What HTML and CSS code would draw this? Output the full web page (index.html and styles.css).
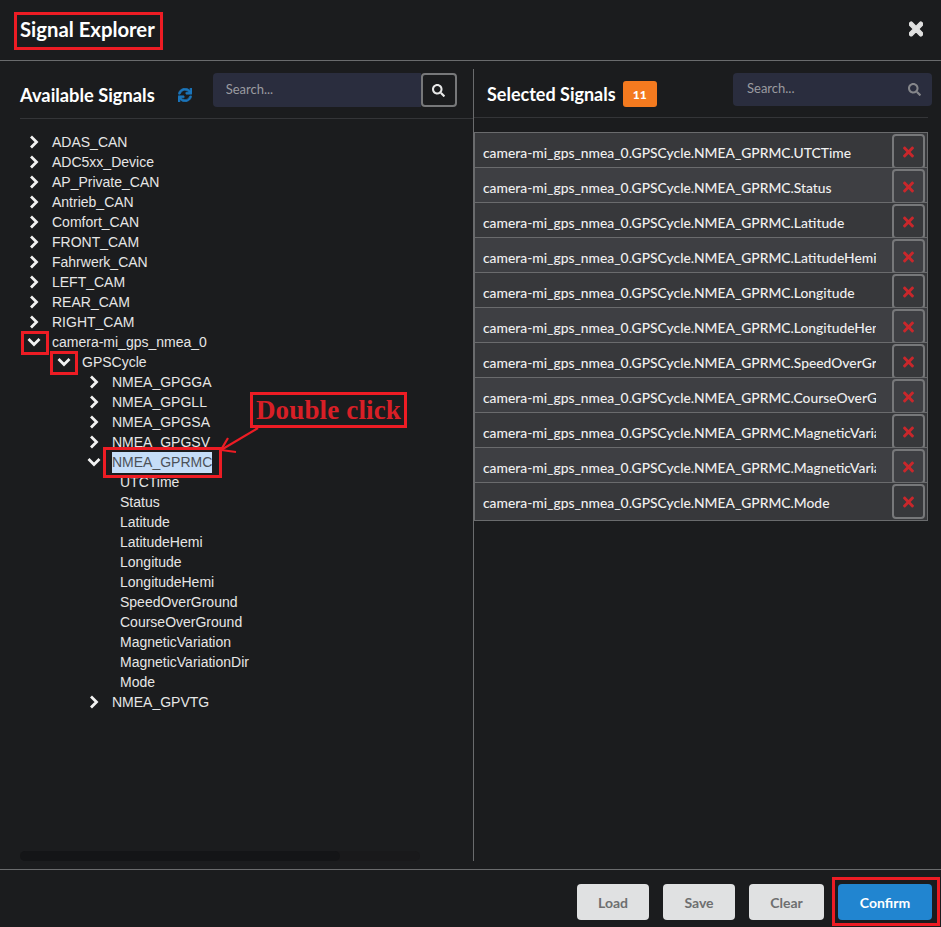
FILE: index.html
```html
<!DOCTYPE html>
<html>

<head>
  <meta charset="UTF-8">
  <title>Signal Explorer</title>
  <link rel="stylesheet" href="styles.css">
</head>

<body>
  <svg class="defs" width="0" height="0">
    <symbol id="i-right" viewBox="0 0 14 14"><polyline points="4,1.5 9.5,7 4,12.5" fill="none" stroke="currentColor" stroke-width="2.8"/></symbol>
    <symbol id="i-down" viewBox="0 0 14 14"><polyline points="1.5,4 7,9.5 12.5,4" fill="none" stroke="currentColor" stroke-width="2.8"/></symbol>
    <symbol id="i-search" viewBox="0 0 512 512"><path fill="currentColor" d="M505 442.7L405.3 343c-4.5-4.5-10.6-7-17-7H372c27.6-35.3 44-79.7 44-128C416 93.1 322.9 0 208 0S0 93.1 0 208s93.1 208 208 208c48.3 0 92.7-16.4 128-44v16.3c0 6.4 2.5 12.5 7 17l99.7 99.7c9.4 9.4 24.6 9.4 33.9 0l28.3-28.3c9.4-9.4 9.4-24.6.1-34zM208 336c-70.7 0-128-57.2-128-128 0-70.7 57.2-128 128-128 70.7 0 128 57.2 128 128 0 70.7-57.2 128-128 128z"/></symbol>
    <symbol id="i-times" viewBox="0 0 352 512"><path fill="currentColor" d="M242.72 256l100.07-100.07c12.28-12.28 12.28-32.19 0-44.48l-22.24-22.24c-12.28-12.28-32.19-12.28-44.48 0L176 189.28 75.93 89.21c-12.28-12.28-32.19-12.28-44.48 0L9.21 111.45c-12.28 12.28-12.28 32.19 0 44.48L109.28 256 9.21 356.07c-12.28 12.28-12.28 32.19 0 44.48l22.24 22.24c12.28 12.28 32.2 12.28 44.48 0L176 322.72l100.07 100.07c12.28 12.28 32.2 12.28 44.48 0l22.24-22.24c12.28-12.28 12.28-32.19 0-44.48L242.72 256z"/></symbol>
    <symbol id="i-sync" viewBox="0 0 512 512"><path fill="currentColor" d="M440.65 12.57l4 82.77A247.16 247.16 0 0 0 255.83 8C134.73 8 33.91 94.92 12.29 209.82A12 12 0 0 0 24.09 224h49.05a12 12 0 0 0 11.67-9.26 175.91 175.91 0 0 1 317-56.94l-101.46-4.86a12 12 0 0 0-12.57 12v47.41a12 12 0 0 0 12 12H500a12 12 0 0 0 12-12V12a12 12 0 0 0-12-12h-47.37a12 12 0 0 0-11.98 12.57zM255.83 432a175.61 175.61 0 0 1-146-77.8l101.8 4.87a12 12 0 0 0 12.57-12v-47.4a12 12 0 0 0-12-12H12a12 12 0 0 0-12 12V500a12 12 0 0 0 12 12h47.35a12 12 0 0 0 12-12.6l-4.15-82.57A247.17 247.17 0 0 0 255.83 504c121.11 0 221.93-86.92 243.55-201.82a12 12 0 0 0-11.8-14.18h-49.05a12 12 0 0 0-11.67 9.26A175.86 175.86 0 0 1 255.83 432z"/></symbol>
  </svg>

  <div class="modal">
    <header class="modal-header">
      <h1>Signal Explorer</h1>
      <button class="close-btn"><svg width="14" height="20"><use href="#i-times"/></svg></button>
    </header>

    <main class="modal-body">
      <section class="panel-left">
        <div class="panel-head head-left">
          <h2 class="title-available">Available Signals</h2>
          <svg class="refresh" width="14" height="14"><use href="#i-sync"/></svg>
          <div class="search-group">
            <input class="search-input" placeholder="Search...">
            <button class="search-btn"><svg width="13" height="13"><use href="#i-search"/></svg></button>
          </div>
        </div>

        <ul class="tree">
          <li><div class="tree-row"><span class="toggle"><svg width="14" height="14"><use href="#i-right"/></svg></span>ADAS_CAN</div></li>
          <li><div class="tree-row"><span class="toggle"><svg width="14" height="14"><use href="#i-right"/></svg></span>ADC5xx_Device</div></li>
          <li><div class="tree-row"><span class="toggle"><svg width="14" height="14"><use href="#i-right"/></svg></span>AP_Private_CAN</div></li>
          <li><div class="tree-row"><span class="toggle"><svg width="14" height="14"><use href="#i-right"/></svg></span>Antrieb_CAN</div></li>
          <li><div class="tree-row"><span class="toggle"><svg width="14" height="14"><use href="#i-right"/></svg></span>Comfort_CAN</div></li>
          <li><div class="tree-row"><span class="toggle"><svg width="14" height="14"><use href="#i-right"/></svg></span>FRONT_CAM</div></li>
          <li><div class="tree-row"><span class="toggle"><svg width="14" height="14"><use href="#i-right"/></svg></span>Fahrwerk_CAN</div></li>
          <li><div class="tree-row"><span class="toggle"><svg width="14" height="14"><use href="#i-right"/></svg></span>LEFT_CAM</div></li>
          <li><div class="tree-row"><span class="toggle"><svg width="14" height="14"><use href="#i-right"/></svg></span>REAR_CAM</div></li>
          <li><div class="tree-row"><span class="toggle"><svg width="14" height="14"><use href="#i-right"/></svg></span>RIGHT_CAM</div></li>
          <li>
            <div class="tree-row"><span class="toggle"><svg width="14" height="14"><use href="#i-down"/></svg></span>camera-mi_gps_nmea_0</div>
            <ul class="tree-sub">
              <li>
                <div class="tree-row"><span class="toggle"><svg width="14" height="14"><use href="#i-down"/></svg></span>GPSCycle</div>
                <ul class="tree-sub">
                  <li><div class="tree-row"><span class="toggle"><svg width="14" height="14"><use href="#i-right"/></svg></span>NMEA_GPGGA</div></li>
                  <li><div class="tree-row"><span class="toggle"><svg width="14" height="14"><use href="#i-right"/></svg></span>NMEA_GPGLL</div></li>
                  <li><div class="tree-row"><span class="toggle"><svg width="14" height="14"><use href="#i-right"/></svg></span>NMEA_GPGSA</div></li>
                  <li><div class="tree-row"><span class="toggle"><svg width="14" height="14"><use href="#i-right"/></svg></span>NMEA_GPGSV</div></li>
                  <li>
                    <div class="tree-row"><span class="toggle"><svg width="14" height="14"><use href="#i-down"/></svg></span><span class="selected-text">NMEA_GPRMC</span></div>
                    <ul class="tree-leaves">
                      <li class="tree-row">UTCTime</li>
                      <li class="tree-row">Status</li>
                      <li class="tree-row">Latitude</li>
                      <li class="tree-row">LatitudeHemi</li>
                      <li class="tree-row">Longitude</li>
                      <li class="tree-row">LongitudeHemi</li>
                      <li class="tree-row">SpeedOverGround</li>
                      <li class="tree-row">CourseOverGround</li>
                      <li class="tree-row">MagneticVariation</li>
                      <li class="tree-row">MagneticVariationDir</li>
                      <li class="tree-row">Mode</li>
                    </ul>
                  </li>
                  <li><div class="tree-row"><span class="toggle"><svg width="14" height="14"><use href="#i-right"/></svg></span>NMEA_GPVTG</div></li>
                </ul>
              </li>
            </ul>
          </li>
        </ul>

        <div class="scrollbar"><div class="scrollbar-thumb"></div></div>
      </section>

      <section class="panel-right">
        <div class="panel-head head-right">
          <h2 class="title-selected">Selected Signals</h2>
          <span class="badge">11</span>
          <div class="search-plain">
            <input class="search-input" placeholder="Search...">
            <svg width="13" height="13"><use href="#i-search"/></svg>
          </div>
        </div>

        <div class="signal-list">
          <div class="signal-row"><span class="signal-name">camera-mi_gps_nmea_0.GPSCycle.NMEA_GPRMC.UTCTime</span><button class="remove-btn"><svg width="11" height="16"><use href="#i-times"/></svg></button></div>
          <div class="signal-row"><span class="signal-name">camera-mi_gps_nmea_0.GPSCycle.NMEA_GPRMC.Status</span><button class="remove-btn"><svg width="11" height="16"><use href="#i-times"/></svg></button></div>
          <div class="signal-row"><span class="signal-name">camera-mi_gps_nmea_0.GPSCycle.NMEA_GPRMC.Latitude</span><button class="remove-btn"><svg width="11" height="16"><use href="#i-times"/></svg></button></div>
          <div class="signal-row"><span class="signal-name">camera-mi_gps_nmea_0.GPSCycle.NMEA_GPRMC.LatitudeHemi</span><button class="remove-btn"><svg width="11" height="16"><use href="#i-times"/></svg></button></div>
          <div class="signal-row"><span class="signal-name">camera-mi_gps_nmea_0.GPSCycle.NMEA_GPRMC.Longitude</span><button class="remove-btn"><svg width="11" height="16"><use href="#i-times"/></svg></button></div>
          <div class="signal-row"><span class="signal-name">camera-mi_gps_nmea_0.GPSCycle.NMEA_GPRMC.LongitudeHemi</span><button class="remove-btn"><svg width="11" height="16"><use href="#i-times"/></svg></button></div>
          <div class="signal-row"><span class="signal-name">camera-mi_gps_nmea_0.GPSCycle.NMEA_GPRMC.SpeedOverGround</span><button class="remove-btn"><svg width="11" height="16"><use href="#i-times"/></svg></button></div>
          <div class="signal-row"><span class="signal-name">camera-mi_gps_nmea_0.GPSCycle.NMEA_GPRMC.CourseOverGround</span><button class="remove-btn"><svg width="11" height="16"><use href="#i-times"/></svg></button></div>
          <div class="signal-row"><span class="signal-name">camera-mi_gps_nmea_0.GPSCycle.NMEA_GPRMC.MagneticVariation</span><button class="remove-btn"><svg width="11" height="16"><use href="#i-times"/></svg></button></div>
          <div class="signal-row"><span class="signal-name">camera-mi_gps_nmea_0.GPSCycle.NMEA_GPRMC.MagneticVariationDir</span><button class="remove-btn"><svg width="11" height="16"><use href="#i-times"/></svg></button></div>
          <div class="signal-row"><span class="signal-name">camera-mi_gps_nmea_0.GPSCycle.NMEA_GPRMC.Mode</span><button class="remove-btn"><svg width="11" height="16"><use href="#i-times"/></svg></button></div>
        </div>
      </section>
    </main>

    <footer class="modal-footer">
      <button class="btn btn-load">Load</button>
      <button class="btn btn-save">Save</button>
      <button class="btn btn-clear">Clear</button>
      <button class="btn btn-confirm">Confirm</button>
    </footer>
  </div>

  <!-- red annotations on top of the screenshot -->
  <div class="mark mark-title"></div>
  <div class="mark mark-toggle-a"></div>
  <div class="mark mark-toggle-b"></div>
  <div class="mark mark-node"></div>
  <div class="mark mark-confirm"></div>
  <div class="mark mark-note">Double click</div>
  <svg class="mark-arrow" width="60" height="40" viewBox="0 0 60 40">
    <polyline points="40,1 3,23" fill="none" stroke="#ed1c24" stroke-width="2.2"/>
    <polyline points="10,11 3,23 18,25" fill="none" stroke="#ed1c24" stroke-width="2.2"/>
  </svg>
</body>

</html>
```

FILE: styles.css
```css
* {
  box-sizing: border-box;
}

html,
body {
  margin: 0;
  height: 927px;
  overflow: hidden;
  background-color: #1b1c1e;
}

body {
  position: relative;
  font-family: "Lato", sans-serif;
  color: #ffffff;
}

.defs {
  position: absolute;
}

.modal {
  display: flex;
  flex-direction: column;
  height: 927px;
}

.modal-header {
  display: flex;
  justify-content: space-between;
  align-items: center;
  height: 61px;
  padding: 0 18px 2px 20px;
  border-bottom: 1px solid #6a6b6d;
}

h1 {
  margin: 0;
  font-size: 20.3px;
  font-weight: 700;
}

h2 {
  margin: 0;
  font-weight: 700;
}

.title-available {
  font-size: 18.3px;
}

.title-selected {
  font-size: 18px;
}

.close-btn {
  padding: 0;
  background: none;
  border: none;
  color: #e0e0e0;
  stroke: #e0e0e0;
  stroke-width: 36px;
  display: flex;
}

.modal-body {
  display: flex;
  height: 808px;
  padding: 8px 0;
}

.panel-left {
  position: relative;
  width: 474px;
  padding-left: 20px;
  border-right: 1px solid #6a6b6d;
}

.panel-right {
  flex: 1;
}

.panel-head {
  display: flex;
}

.head-left {
  height: 50px;
  padding-top: 4px;
  border-bottom: 1px solid #343538;
  align-items: flex-start;
}

.head-left h2 {
  margin-top: 11px;
}

.refresh {
  margin: 15px 21px 0 23px;
  color: #1b75bb;
  stroke: #1b75bb;
  stroke-width: 24px;
}

.search-group {
  display: flex;
}

.search-input {
  height: 34px;
  padding: 0 13px 3px;
  border: none;
  border-radius: 4px 0 0 4px;
  background-color: #2a2d3e;
  font-family: "Lato", sans-serif;
  font-size: 13px;
  color: #ffffff;
  outline: none;
}

.search-input::placeholder {
  color: #9a9ba0;
}

.search-group .search-input {
  width: 208px;
}

.search-btn {
  display: flex;
  align-items: center;
  justify-content: center;
  width: 36px;
  height: 34px;
  padding: 0;
  background: none;
  border: 2px solid #77787a;
  border-radius: 4px;
  color: #e8e8e8;
}

.head-right {
  position: relative;
  width: 454px;
  height: 49px;
  padding: 12px 0 0 13px;
  border-bottom: 1px solid #343538;
  align-items: flex-start;
}

.head-right h2 {
  margin-top: 2px;
}

.badge {
  display: flex;
  align-items: center;
  justify-content: center;
  width: 34px;
  height: 26px;
  margin-left: 7px;
  background-color: #f47a1f;
  border-radius: 3px;
  font-size: 12px;
  font-weight: 900;
}

.search-plain {
  position: absolute;
  top: 4px;
  left: 259px;
  width: 199px;
  display: flex;
  align-items: center;
  color: #85868a;
}

.search-plain .search-input {
  width: 100%;
  height: 33px;
  padding-left: 14px;
  border-radius: 4px;
}

.search-plain svg {
  position: absolute;
  right: 11px;
}

.tree,
.tree-sub,
.tree-leaves {
  margin: 0;
  padding: 0;
  list-style: none;
}

.tree {
  margin-top: 13px;
  font-family: "Liberation Sans", sans-serif;
  font-size: 14px;
  color: #e6e6e6;
}

.tree-sub {
  padding-left: 30px;
}

.tree-leaves {
  padding-left: 40px;
}

.tree-row {
  display: flex;
  align-items: center;
  height: 20px;
  white-space: nowrap;
}

.toggle {
  display: flex;
  width: 32px;
  padding-left: 7px;
  color: #f2f2f2;
}

.selected-text {
  background-color: #c5ddf8;
  color: #4c5158;
  line-height: 21px;
}

.scrollbar {
  position: absolute;
  left: 20px;
  bottom: 0;
  width: 400px;
  height: 10px;
  background-color: #19191b;
  border-radius: 5px;
}

.scrollbar-thumb {
  width: 320px;
  height: 10px;
  background-color: #141517;
  border-radius: 5px;
}

.signal-list {
  width: 454px;
  margin-top: 14px;
  border-right: 1px solid #6a6b6d;
  border-bottom: 1px solid #6a6b6d;
  border-left: 1px solid #6a6b6d;
}

.signal-row {
  display: flex;
  align-items: flex-start;
  height: 35px;
  padding: 1px 0 0 8px;
  overflow: hidden;
  border-top: 1px solid #6a6b6d;
  background-color: #37383b;
}

.signal-row:nth-child(even) {
  background-color: #3e3f43;
}

.signal-row:last-child {
  height: 38px;
}

.signal-name {
  width: 393px;
  line-height: 38px;
  overflow: hidden;
  white-space: nowrap;
  font-size: 13.84px;
  font-weight: 500;
  color: #f0f0f0;
}

.remove-btn {
  display: flex;
  flex: none;
  align-items: center;
  justify-content: center;
  width: 33px;
  height: 35px;
  margin-left: 16px;
  padding: 0;
  background: none;
  border: 2px solid #77787a;
  border-radius: 4px;
  color: #c9272b;
}

.modal-footer {
  display: flex;
  justify-content: flex-end;
  gap: 14px;
  height: 58px;
  padding: 14px 9px 0 0;
  border-top: 1px solid #6a6b6d;
}

.btn {
  height: 36px;
  padding: 0;
  border: none;
  border-radius: 4px;
  background-color: #e0e1e2;
  font-family: "Lato", sans-serif;
  font-size: 14px;
  font-weight: 700;
  color: #6e6f70;
}

.btn-load,
.btn-save {
  width: 72px;
}

.btn-clear {
  width: 75px;
}

.btn-confirm {
  width: 94px;
  background-color: #2185d0;
  color: #ffffff;
}

.mark {
  position: absolute;
  border: 3px solid #ed1c24;
}

.mark-title {
  left: 14px;
  top: 12px;
  width: 149px;
  height: 38px;
}

.mark-toggle-a {
  left: 21px;
  top: 331px;
  width: 28px;
  height: 24px;
}

.mark-toggle-b {
  left: 50px;
  top: 351px;
  width: 28px;
  height: 24px;
}

.mark-node {
  left: 103px;
  top: 447px;
  width: 119px;
  height: 31px;
}

.mark-confirm {
  left: 832px;
  top: 877px;
  width: 108px;
  height: 49px;
}

.mark-note {
  left: 250px;
  top: 392px;
  width: 157px;
  height: 36px;
  font-family: "Liberation Serif", serif;
  font-size: 27px;
  font-weight: 700;
  line-height: 30px;
  letter-spacing: 0.15px;
  text-align: center;
  color: #d81f26;
  white-space: nowrap;
}

.mark-arrow {
  position: absolute;
  left: 218px;
  top: 427px;
}
```
